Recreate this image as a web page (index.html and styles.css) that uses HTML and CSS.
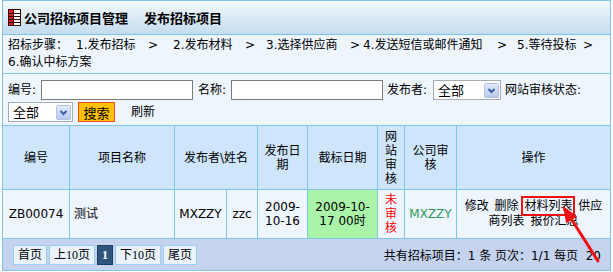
FILE: index.html
```html
<!DOCTYPE html>
<html lang="zh-CN">
<head>
<meta charset="utf-8">
<title>发布招标项目</title>
<link rel="stylesheet" href="styles.css">
</head>
<body>
<div class="page">
  <div class="title">
    <svg class="title-icon" width="13" height="17" viewBox="0 0 13 17">
      <rect x="0.5" y="0.5" width="12" height="16" fill="#fff" stroke="#3a0a0a"/>
      <rect x="1" y="1" width="4" height="15" fill="#d81e1e"/>
      <path d="M1 4.5H12M1 7.5H12M1 10.5H12M1 13.5H12" stroke="#3a0a0a"/>
      <path d="M5.5 1V16" stroke="#3a0a0a"/>
    </svg>
    <span class="title-text">公司招标项目管理</span>
    <span class="title-text title-sub">发布招标项目</span>
  </div>

  <div class="steps">
    <span class="step step-label">招标步骤：</span><span class="step step-1">1.发布招标</span><span class="step gt gt-1">&gt;</span><span class="step step-2">2.发布材料</span><span class="step gt gt-2">&gt;</span><span class="step step-3">3.选择供应商</span><span class="step gt gt-3">&gt;</span><span class="step step-4">4.发送短信或邮件通知</span><span class="step gt gt-4">&gt;</span><span class="step step-5">5.等待投标</span><span class="step gt gt-5">&gt;</span><span class="step step-6">6.确认中标方案</span>
  </div>

  <div class="search">
    <div class="search-row">
      <span class="lbl lbl-no">编号:</span><input class="txt" type="text">
      <span class="lbl lbl-name">名称:</span><input class="txt" type="text">
      <span class="lbl lbl-pub">发布者:</span>
      <div class="sel sel-pub"><span>全部</span>
        <svg class="sel-btn" width="15" height="15" viewBox="0 0 15 15">
          <defs><linearGradient id="g1" x1="0" y1="0" x2="0" y2="1"><stop offset="0" stop-color="#e3eafb"/><stop offset="1" stop-color="#b7c7ee"/></linearGradient></defs>
          <rect x="0.5" y="0.5" width="14" height="14" rx="1" fill="url(#g1)" stroke="#b3c3e8"/>
          <path d="M4.5 6 L7.5 9 L10.5 6" fill="none" stroke="#3c5fa8" stroke-width="2"/>
        </svg>
      </div>
      <span class="lbl lbl-state">网站审核状态:</span>
    </div>
    <div class="search-row">
      <div class="sel sel-state"><span>全部</span>
        <svg class="sel-btn" width="15" height="15" viewBox="0 0 15 15">
          <defs><linearGradient id="g2" x1="0" y1="0" x2="0" y2="1"><stop offset="0" stop-color="#e3eafb"/><stop offset="1" stop-color="#b7c7ee"/></linearGradient></defs>
          <rect x="0.5" y="0.5" width="14" height="14" rx="1" fill="url(#g2)" stroke="#b3c3e8"/>
          <path d="M4.5 6 L7.5 9 L10.5 6" fill="none" stroke="#3c5fa8" stroke-width="2"/>
        </svg>
      </div>
      <button class="btn-search" type="button">搜索</button>
      <span class="refresh">刷新</span>
    </div>
  </div>

  <div class="grid">
    <div class="cell head">编号</div>
    <div class="cell head">项目名称</div>
    <div class="cell head span2">发布者\姓名</div>
    <div class="cell head">发布日期</div>
    <div class="cell head">截标日期</div>
    <div class="cell head">网站审核</div>
    <div class="cell head">公司审核</div>
    <div class="cell head last">操作</div>

    <div class="cell data">ZB00074</div>
    <div class="cell data left">测试</div>
    <div class="cell data">MXZZY</div>
    <div class="cell data">zzc</div>
    <div class="cell data">2009-10-16</div>
    <div class="cell data green">2009-10-17 00时</div>
    <div class="cell data red">未审核</div>
    <div class="cell data company">MXZZY</div>
    <div class="cell data last ops"><p class="ops-text">修改 删除 <span class="marked">材料列表</span> 供应商列表 报价汇总</p></div>
  </div>

  <div class="footer">
    <div class="pager">
      <span class="pg">首页</span><span class="pg">上10页</span><span class="pg pg-on">1</span><span class="pg">下10页</span><span class="pg">尾页</span>
    </div>
    <div class="summary">共有招标项目：1 条 页次：1/1 每页 &nbsp;20</div>
  </div>

  <svg class="annot-arrow" width="60" height="75" viewBox="0 0 60 75">
    <path d="M48 66 L21.6 24.5" stroke="#f01010" stroke-width="3" stroke-linecap="round"/>
    <path d="M13 11 L27.2 21.6 L16.2 28.2 Z" fill="#f01010"/>
  </svg>
</div>
</body>
</html>
```

FILE: styles.css
```css
html, body {
  margin: 0;
  padding: 0;
  background: #fff;
}

body {
  font-family: "DejaVu Sans", "Noto Sans CJK SC", sans-serif;
  font-size: 12px;
  color: #000;
}

.page {
  position: relative;
  margin-left: 2px;
  width: 607px;
  border: 1px solid #7fc4ec;
}

/* title bar */
.title {
  height: 33px;
  border-bottom: 1px solid #7fc4ec;
  background: linear-gradient(#f3f8fc, #c3dcee);
  display: flex;
  align-items: center;
  padding-left: 5px;
}

.title-icon {
  display: block;
  margin-right: 3px;
}

.title-text {
  font-family: "Noto Sans CJK SC", sans-serif;
  font-size: 13px;
  font-weight: bold;
  line-height: 16px;
}

.title-sub {
  margin-left: 16px;
}

/* steps */
.steps {
  height: 36px;
  padding: 2px 0 0 5px;
  line-height: 17px;
  background: #eef5fd;
  border-bottom: 1px solid #7fc4ec;
  overflow: hidden;
}

.step {
  display: inline-block;
  white-space: nowrap;
  vertical-align: top;
}

.step-label { width: 68px; }
.step-1 { width: 72px; }
.gt-1 { width: 25px; }
.step-2 { width: 72px; }
.gt-2 { width: 21px; }
.step-3 { width: 84px; }
.gt-3 { width: 13px; }
.step-4 { width: 134px; }
.gt-4 { width: 20px; }
.step-5 { width: 66px; }
.gt-5 { width: 14px; }

/* search */
.search {
  height: 45px;
  padding: 6px 0 0 5px;
  background: #eef5fd;
  display: flex;
  flex-direction: column;
  gap: 2px;
}

.search-row {
  display: flex;
  align-items: center;
  height: 20px;
}

.lbl {
  display: inline-block;
  white-space: nowrap;
  line-height: 20px;
}

.lbl-no { width: 33px; }
.lbl-name { width: 33px; margin-left: 5px; }
.lbl-pub { width: 46px; margin-left: 4px; }
.lbl-state { margin-left: 4px; }

.txt {
  box-sizing: border-box;
  width: 152px;
  height: 20px;
  margin: 0;
  padding: 0 2px;
  border: 1px solid #7b7b7b;
  background: #fff;
}

.sel {
  box-sizing: border-box;
  height: 20px;
  border: 1px solid #a5acb5;
  background: #fff;
  display: flex;
  align-items: center;
  justify-content: space-between;
  padding: 0 1px 0 4px;
  font-family: "Noto Sans CJK SC", sans-serif;
  font-size: 13px;
  line-height: 18px;
}

.sel-pub { width: 68px; }
.sel-state { width: 65px; }

.sel-btn { display: block; }

.btn-search {
  box-sizing: border-box;
  width: 37px;
  height: 20px;
  margin: 0 0 0 5px;
  padding: 0;
  border: 1px solid #ec4a24;
  background: #ffc000;
  font-family: "Noto Sans CJK SC", sans-serif;
  font-size: 13px;
  line-height: 17px;
  color: #000;
}

.refresh {
  margin-left: 16px;
  line-height: 20px;
}

/* table */
.grid {
  display: grid;
  grid-template-columns: 67px 105px 52px 31px 50px 70px 27px 52px 153px;
  grid-template-rows: 64px 49px;
  border-top: 1px solid #7fc4ec;
}

.cell {
  box-sizing: border-box;
  border-right: 1px solid #7fc4ec;
  border-bottom: 1px solid #7fc4ec;
  display: flex;
  align-items: center;
  justify-content: center;
  text-align: center;
  padding: 0 3px;
  line-height: 14px;
}

.cell.last { border-right: 0; }

.head { background: #cee5fb; }
.span2 { grid-column: span 2; }

.data { background: #eef5fd; }
.data.left { justify-content: flex-start; text-align: left; padding-left: 4px; }
.data.green { background: #a9f4a9; }
.data.red { color: #ff0000; }
.data.company { color: #2d9a5e; }
.data.ops { padding: 0 6px; }

.ops-text {
  margin: 0;
  word-spacing: 2px;
  line-height: 15px;
  text-align: center;
}

.marked {
  outline: 2px solid #f01010;
  outline-offset: 1px;
}

/* footer */
.footer {
  height: 31px;
  background: #c5d3ef;
  display: flex;
  align-items: center;
  justify-content: space-between;
  padding: 0 9px 0 10px;
}

.pager {
  display: flex;
  gap: 2px;
}

.pg {
  box-sizing: border-box;
  height: 20px;
  padding: 0 4px;
  border: 1px solid #9fcdf0;
  background: #eaf3fc;
  font-family: "Liberation Serif", "Noto Sans CJK SC", serif;
  font-size: 12px;
  line-height: 18px;
}

.pg-on {
  background: #2f557f;
  border-color: #1f3d60;
  color: #fff;
  font-weight: bold;
}

.summary {
  white-space: nowrap;
}

.annot-arrow {
  position: absolute;
  left: 547px;
  top: 194px;
}
```
